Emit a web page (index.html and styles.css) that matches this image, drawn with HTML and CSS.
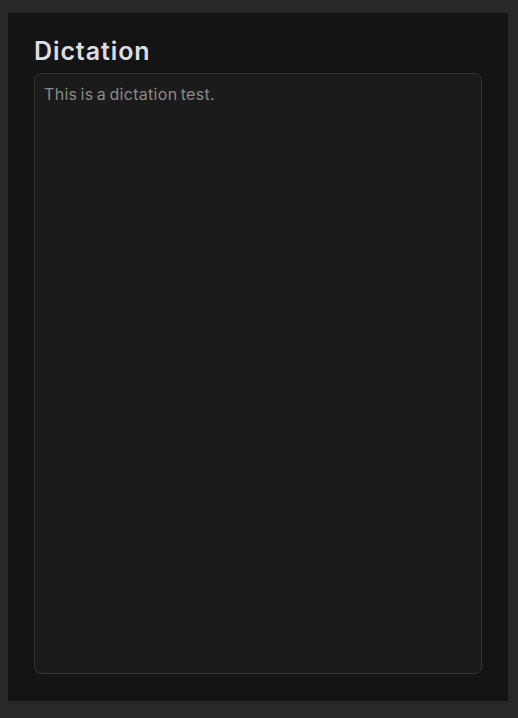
FILE: index.html
```html
<!DOCTYPE html>
<html lang="en">
<head>
<meta charset="utf-8">
<title>Dictation</title>
<link rel="stylesheet" href="styles.css">
</head>
<body>
<div class="page">
  <section class="panel">
    <h1 class="title">Dictation</h1>
    <textarea class="dictation" spellcheck="false">This is a dictation test.</textarea>
  </section>
</div>
</body>
</html>
```
FILE: styles.css
```css
html, body {
  margin: 0;
  padding: 0;
  background: #282828;
}
.page {
  box-sizing: border-box;
  width: 518px;
  height: 718px;
  padding: 13px 10px 17px 8px;
  display: flex;
}
.panel {
  flex: 1;
  background: #141414;
  box-sizing: border-box;
  padding: 23px 26px 27px 26px;
  display: flex;
  flex-direction: column;
}
.title {
  margin: 0 0 7px 0;
  font-family: Inter, "Noto Sans", sans-serif;
  font-weight: 600;
  font-size: 25px;
  line-height: 30px;
  color: #dcdfe6;
  letter-spacing: 0.9px;
}
.dictation {
  flex: 1;
  resize: none;
  box-sizing: border-box;
  width: 100%;
  margin: 0;
  background: #1b1b1b;
  border: 1px solid #343434;
  border-radius: 7px;
  padding: 8px 9px;
  font-family: Inter, "Noto Sans", sans-serif;
  font-size: 16px;
  line-height: 24px;
  color: #8a8a8a;
  outline: none;
  letter-spacing: 0.3px;
  word-spacing: -1.5px;
}
```
